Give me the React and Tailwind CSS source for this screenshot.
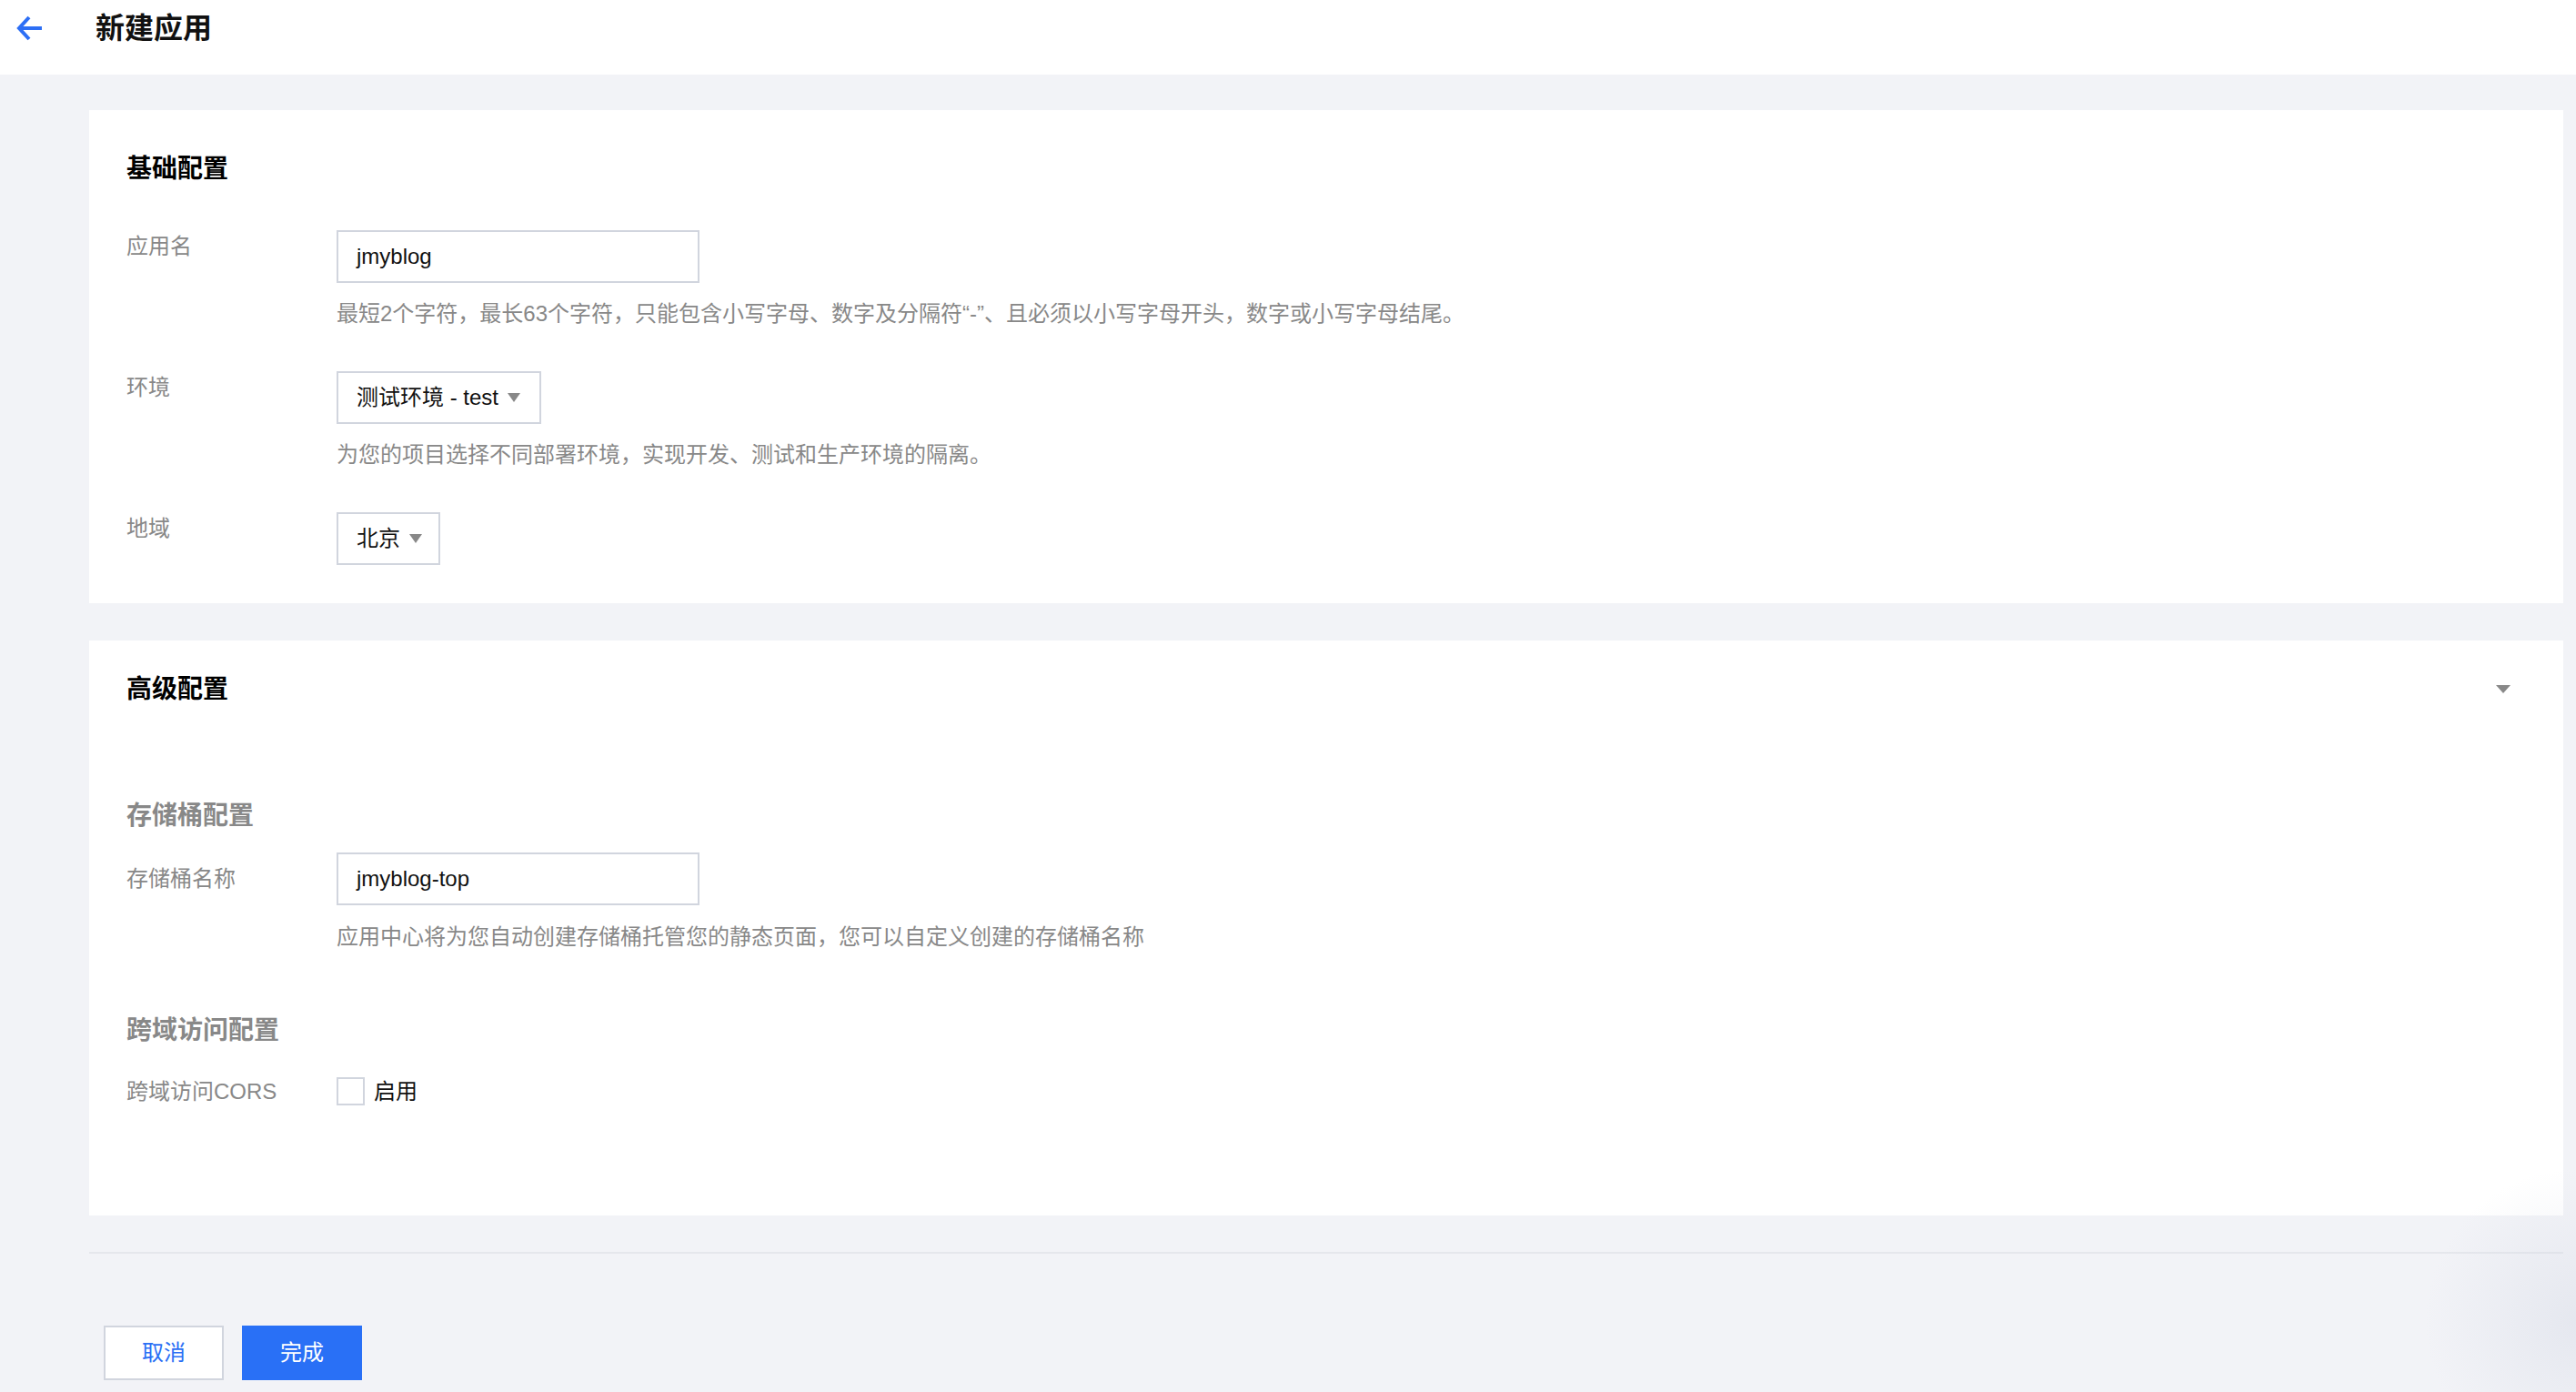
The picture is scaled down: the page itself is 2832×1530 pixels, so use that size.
import React from 'react';

const font = "font-['Liberation_Sans','Noto_Sans_CJK_SC',sans-serif]";

function Caret({ className = '' }) {
  return (
    <svg className={className} width="14" height="10" viewBox="0 0 14 10">
      <path d="M0 0 H14 L7 10 Z" fill="#888" />
    </svg>
  );
}

function FormRow({ label, children, help, className = '' }) {
  return (
    <div className={`flex ${className}`}>
      <div className="w-[231px] shrink-0 text-[24px] leading-[36px] text-[#888]">{label}</div>
      <div className="flex flex-col">
        {children}
        {help && <p className="mt-[16px] text-[24px] leading-[36px] text-[#888]">{help}</p>}
      </div>
    </div>
  );
}

function Select({ value, width }) {
  return (
    <div className={`flex h-[58px] items-center border-2 border-[#d1d5de] bg-white pl-[20px] ${width}`}>
      <span className="text-[24px] text-[#111]">{value}</span>
      <Caret className="ml-[10px]" />
    </div>
  );
}

export default function App() {
  return (
    <div className={`${font} relative min-h-[1530px] w-full overflow-hidden bg-[#f2f3f7]`}>
      {/* header */}
      <header className="h-[82px] bg-white">
        <div className="flex h-[62px] items-center pl-[18px]">
          <svg width="30" height="28" viewBox="0 0 30 28" fill="none">
            <path d="M28 14 H3" stroke="#2d6ff5" strokeWidth="4" />
            <path d="M14 2 L3 14 L14 26" stroke="#2d6ff5" strokeWidth="4" />
          </svg>
          <h1 className="ml-[57px] text-[32px] font-bold leading-none text-[#111]">新建应用</h1>
        </div>
      </header>

      <main className="pl-[98px] pr-[14px] pt-[39px]">
        {/* basic config */}
        <section className="bg-white pb-[42px] pl-[41px] pt-[45px]">
          <h2 className="mb-[47px] text-[28px] font-bold leading-[40px] text-[#000]">基础配置</h2>

          <FormRow
            label="应用名"
            help="最短2个字符，最长63个字符，只能包含小写字母、数字及分隔符“-”、且必须以小写字母开头，数字或小写字母结尾。"
            className="mb-[45px]"
          >
            <div className="flex h-[58px] w-[399px] items-center border-2 border-[#d1d5de] bg-white pl-[20px] text-[24px] text-[#111]">
              jmyblog
            </div>
          </FormRow>

          <FormRow
            label="环境"
            help="为您的项目选择不同部署环境，实现开发、测试和生产环境的隔离。"
            className="mb-[45px]"
          >
            <Select value="测试环境 - test" width="w-[225px]" />
          </FormRow>

          <FormRow label="地域">
            <Select value="北京" width="w-[114px]" />
          </FormRow>
        </section>

        {/* advanced config */}
        <section className="mt-[41px] bg-white pb-[121px] pl-[41px] pr-[58px] pt-[34px]">
          <div className="flex items-center justify-between">
            <h2 className="text-[28px] font-bold leading-[40px] text-[#000]">高级配置</h2>
            <svg width="16" height="10" viewBox="0 0 16 10">
              <path d="M0 0 H16 L8 9 Z" fill="#888" />
            </svg>
          </div>

          <h3 className="mt-[99px] text-[28px] font-bold leading-[40px] text-[#888]">存储桶配置</h3>
          <div className="mt-[20px] flex">
            <div className="flex h-[58px] w-[231px] shrink-0 items-center text-[24px] text-[#888]">存储桶名称</div>
            <div className="flex flex-col">
              <div className="flex h-[58px] w-[399px] items-center border-2 border-[#d1d5de] bg-white pl-[20px] text-[24px] text-[#111]">
                jmyblog-top
              </div>
              <p className="mt-[17px] text-[24px] leading-[36px] text-[#888]">
                应用中心将为您自动创建存储桶托管您的静态页面，您可以自定义创建的存储桶名称
              </p>
            </div>
          </div>

          <h3 className="mt-[65px] text-[28px] font-bold leading-[40px] text-[#888]">跨域访问配置</h3>
          <div className="mt-[31px] flex items-center">
            <div className="w-[231px] shrink-0 text-[24px] leading-[31px] text-[#888]">跨域访问CORS</div>
            <label className="flex items-center">
              <span className="h-[31px] w-[31px] border-2 border-[#d1d5de] bg-white" />
              <span className="ml-[10px] text-[24px] leading-[31px] text-[#111]">启用</span>
            </label>
          </div>
        </section>

        <div className="mt-[40px] h-[2px] bg-[#e5e7ec]" />

        {/* footer buttons */}
        <div className="mt-[79px] flex gap-[20px] pl-[16px]">
          <button className="flex h-[60px] w-[132px] items-center justify-center border-2 border-[#d1d5de] bg-white text-[24px] text-[#2a6ff5]">
            取消
          </button>
          <button className="flex h-[60px] w-[132px] items-center justify-center bg-[#2970f6] text-[24px] text-white">
            完成
          </button>
        </div>
      </main>

      <div className="pointer-events-none absolute bottom-0 right-0 h-[260px] w-[180px] bg-[radial-gradient(ellipse_at_100%_70%,rgba(205,210,224,0.35),transparent_65%)]" />
    </div>
  );
}
